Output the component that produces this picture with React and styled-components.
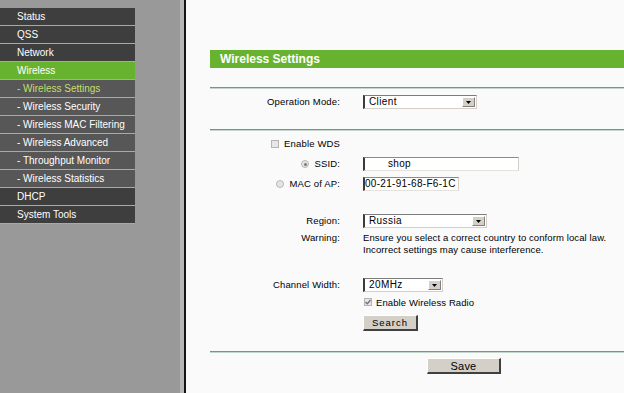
import React from "react";
import styled, { createGlobalStyle } from "styled-components";

const GlobalStyle = createGlobalStyle`
  html, body { margin: 0; padding: 0; }
  body {
    font-family: "Liberation Sans", Arial, sans-serif;
    background: #fafafa;
    overflow: hidden;
  }
`;

const Page = styled.div`
  display: flex;
  width: 624px;
  height: 393px;
  overflow: hidden;
`;

const Sidebar = styled.nav`
  width: 180px;
  flex: none;
  background: #999999;
  padding-top: 8px;
  box-sizing: border-box;
`;

const Divider = styled.div`
  width: 4px;
  flex: none;
  background: #b6b6b6;
  border-right: 2px solid #141414;
`;

const Menu = styled.ul`
  list-style: none;
  margin: 0;
  padding: 0;
  width: 135px;
`;

const bgFor = (v) =>
  v === "active" ? "#67b330" : v === "sub" || v === "subActive" ? "#575757" : "#3e3e3e";

const MenuItem = styled.li`
  height: 17px;
  line-height: 17px;
  border-bottom: 1px solid #a9a9a9;
  padding-left: 17px;
  font-size: 10px;
  letter-spacing: 0;
  white-space: nowrap;
  color: ${(p) => (p.$variant === "subActive" ? "#c5df6c" : "#ffffff")};
  background: ${(p) => bgFor(p.$variant)};
`;

const Main = styled.main`
  flex: 1;
  min-width: 0;
  background: #fafafa;
  padding-top: 50px;
  padding-left: 24px;
  overflow: hidden;
`;

const Header = styled.h1`
  margin: 0;
  height: 18px;
  line-height: 18px;
  background: #67b330;
  color: #ffffff;
  font-size: 12px;
  font-weight: bold;
  padding-left: 10px;
  width: 600px;
`;

const HLine = styled.div`
  margin-top: ${(p) => p.$mt}px;
  width: 600px;
  height: 1px;
  background: #6a9b89;
  border-bottom: 1px solid #c4d7cf;
`;

const Row = styled.div`
  display: grid;
  grid-template-columns: 130px 1fr;
  column-gap: 23px;
  align-items: center;
  margin-top: ${(p) => p.$mt}px;
  height: ${(p) => p.$h}px;
`;

const Label = styled.div`
  display: flex;
  justify-content: flex-end;
  align-items: center;
  align-self: ${(p) => (p.$top ? "start" : "center")};
  gap: 5px;
  font-size: 9.5px;
  letter-spacing: 0.15px;
  line-height: 12px;
  color: #000;
  white-space: nowrap;
`;

const Value = styled.div`
  display: flex;
  align-items: center;
  gap: 4px;
  font-size: 9.5px;
  letter-spacing: 0.1px;
  color: #000;
  white-space: nowrap;
  padding-left: ${(p) => p.$pl || 0}px;
`;

const Warning = styled.div`
  font-size: 9.5px;
  letter-spacing: 0.1px;
  line-height: 12px;
  color: #000;
  white-space: nowrap;
`;

const SelectBox = styled.div`
  width: ${(p) => p.$w}px;
  height: 14px;
  box-sizing: border-box;
  display: flex;
  align-items: center;
  background: #ffffff;
  border-style: solid;
  border-width: 1px 1px 1px 2px;
  border-color: #7c7c7c #d4d0c8 #d4d0c8 #3c3c3c;
`;

const SelectText = styled.span`
  flex: 1;
  padding-left: 4px;
  font-size: 10px;
  letter-spacing: 0.4px;
  line-height: 12px;
`;

const SelectArrow = styled.span`
  width: 13px;
  height: 10px;
  margin-right: 1px;
  box-sizing: border-box;
  background: #d4d0c8;
  border-style: solid;
  border-width: 1px;
  border-color: #ffffff #808080 #808080 #ffffff;
  display: flex;
  align-items: center;
  justify-content: center;
`;

const TextInput = styled.div`
  width: ${(p) => p.$w}px;
  height: 14px;
  box-sizing: border-box;
  background: #ffffff;
  border-style: solid;
  border-width: 1px 1px 1px 2px;
  border-color: #8a8a8a #d4d0c8 #e4e2dc #3a3a3a;
  padding-left: ${(p) => p.$indent}px;
  font-size: 10px;
  letter-spacing: 0.3px;
  line-height: 12px;
  color: #000;
`;

const Check = styled.span`
  width: 8px;
  height: 8px;
  box-sizing: border-box;
  border: 1px solid #b4b4b4;
  background: #e6e6e6;
  display: inline-flex;
  align-items: center;
  justify-content: center;
  flex: none;
`;

const Radio = styled.span`
  width: 8px;
  height: 8px;
  box-sizing: border-box;
  border-radius: 50%;
  border: 1px solid #b8b8b8;
  background: #e4e4e4;
  display: inline-flex;
  align-items: center;
  justify-content: center;
  flex: none;
  &::after {
    content: "";
    width: 3px;
    height: 3px;
    border-radius: 50%;
    background: ${(p) => (p.$on ? "#7a7a7a" : "transparent")};
  }
`;

const Button = styled.button`
  width: ${(p) => p.$w}px;
  height: 16px;
  padding: 0;
  box-sizing: border-box;
  background: #d4d0c8;
  border-style: solid;
  border-width: 1px 2px 2px 1px;
  border-color: #ffffff #404040 #404040 #ffffff;
  font-family: "Liberation Sans", Arial, sans-serif;
  font-size: ${(p) => p.$fs}px;
  letter-spacing: ${(p) => p.$ls}px;
  color: #000;
  line-height: 12px;
`;

const Arrow = () => (
  <svg width="5" height="3" viewBox="0 0 5 3">
    <path d="M0 0h5L2.5 3z" fill="#000" />
  </svg>
);

const Tick = () => (
  <svg width="6" height="6" viewBox="0 0 6 6">
    <path d="M0.5 3l1.8 1.8L5.5 1" stroke="#6e6e6e" strokeWidth="1.3" fill="none" />
  </svg>
);

const Select = ({ w, children }) => (
  <SelectBox $w={w}>
    <SelectText>{children}</SelectText>
    <SelectArrow>
      <Arrow />
    </SelectArrow>
  </SelectBox>
);

const menu = [
  ["Status", "main"],
  ["QSS", "main"],
  ["Network", "main"],
  ["Wireless", "active"],
  ["- Wireless Settings", "subActive"],
  ["- Wireless Security", "sub"],
  ["- Wireless MAC Filtering", "sub"],
  ["- Wireless Advanced", "sub"],
  ["- Throughput Monitor", "sub"],
  ["- Wireless Statistics", "sub"],
  ["DHCP", "main"],
  ["System Tools", "main"],
];

export default function App() {
  return (
    <>
      <GlobalStyle />
      <Page>
        <Sidebar>
          <Menu>
            {menu.map(([t, v]) => (
              <MenuItem key={t} $variant={v}>
                {t}
              </MenuItem>
            ))}
          </Menu>
        </Sidebar>
        <Divider />
        <Main>
          <Header>Wireless Settings</Header>
          <HLine $mt={19} />
          <Row $mt={6} $h={14}>
            <Label>Operation Mode:</Label>
            <Select w={114}>Client</Select>
          </Row>
          <HLine $mt={20} />
          <Row $mt={7} $h={12}>
            <Label>
              <Check />
              Enable WDS
            </Label>
          </Row>
          <Row $mt={7} $h={14}>
            <Label>
              <Radio $on />
              SSID:
            </Label>
            <TextInput $w={156} $indent={23}>shop</TextInput>
          </Row>
          <Row $mt={6} $h={14}>
            <Label>
              <Radio />
              MAC of AP:
            </Label>
            <TextInput $w={96} $indent={0}>00-21-91-68-F6-1C</TextInput>
          </Row>
          <Row $mt={23} $h={14}>
            <Label>Region:</Label>
            <Select w={124}>Russia</Select>
          </Row>
          <Row $mt={4} $h={24}>
            <Label $top>Warning:</Label>
            <Warning>
              Ensure you select a correct country to conform local law.
              <br />
              Incorrect settings may cause interference.
            </Warning>
          </Row>
          <Row $mt={22} $h={14}>
            <Label>Channel Width:</Label>
            <Select w={80}>20MHz</Select>
          </Row>
          <Row $mt={4} $h={12}>
            <span />
            <Value $pl={1}>
              <Check>
                <Tick />
              </Check>
              Enable Wireless Radio
            </Value>
          </Row>
          <Row $mt={7} $h={16}>
            <span />
            <Value>
              <Button $w={55} $fs={9.5} $ls={1}>
                Search
              </Button>
            </Value>
          </Row>
          <HLine $mt={20} />
          <Row $mt={5} $h={16}>
            <span />
            <Value $pl={64}>
              <Button $w={74} $fs={11} $ls={0.2}>
                Save
              </Button>
            </Value>
          </Row>
        </Main>
      </Page>
    </>
  );
}
